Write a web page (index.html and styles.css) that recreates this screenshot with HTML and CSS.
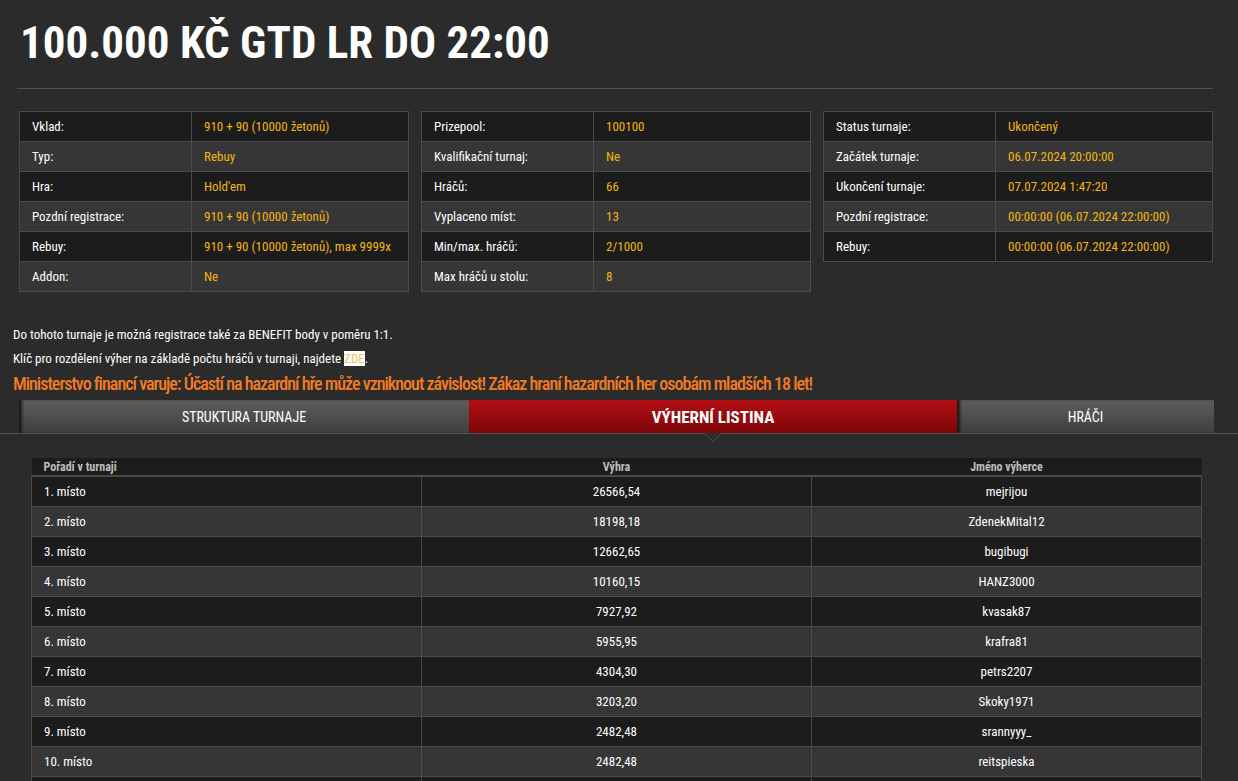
FILE: index.html
```html
<!DOCTYPE html>
<html lang="cs">
<head>
<meta charset="utf-8">
<title>100.000 KČ GTD LR DO 22:00</title>
<link rel="stylesheet" href="styles.css">
</head>
<body>
<div class="page">
  <header class="head">
    <h1 class="title">100.000 KČ GTD LR DO 22:00</h1>
  </header>

  <div class="info-grid">
    <table class="info">
      <tr><td class="lbl">Vklad:</td><td class="val">910 + 90 (10000 žetonů)</td></tr>
      <tr><td class="lbl">Typ:</td><td class="val">Rebuy</td></tr>
      <tr><td class="lbl">Hra:</td><td class="val">Hold'em</td></tr>
      <tr><td class="lbl">Pozdní registrace:</td><td class="val">910 + 90 (10000 žetonů)</td></tr>
      <tr><td class="lbl">Rebuy:</td><td class="val">910 + 90 (10000 žetonů), max 9999x</td></tr>
      <tr><td class="lbl">Addon:</td><td class="val">Ne</td></tr>
    </table>
    <table class="info">
      <tr><td class="lbl">Prizepool:</td><td class="val">100100</td></tr>
      <tr><td class="lbl">Kvalifikační turnaj:</td><td class="val">Ne</td></tr>
      <tr><td class="lbl">Hráčů:</td><td class="val">66</td></tr>
      <tr><td class="lbl">Vyplaceno míst:</td><td class="val">13</td></tr>
      <tr><td class="lbl">Min/max. hráčů:</td><td class="val">2/1000</td></tr>
      <tr><td class="lbl">Max hráčů u stolu:</td><td class="val">8</td></tr>
    </table>
    <table class="info">
      <tr><td class="lbl">Status turnaje:</td><td class="val">Ukončený</td></tr>
      <tr><td class="lbl">Začátek turnaje:</td><td class="val">06.07.2024 20:00:00</td></tr>
      <tr><td class="lbl">Ukončení turnaje:</td><td class="val">07.07.2024 1:47:20</td></tr>
      <tr><td class="lbl">Pozdní registrace:</td><td class="val">00:00:00 (06.07.2024 22:00:00)</td></tr>
      <tr><td class="lbl">Rebuy:</td><td class="val">00:00:00 (06.07.2024 22:00:00)</td></tr>
    </table>
  </div>

  <div class="notes">
    <p class="note">Do tohoto turnaje je možná registrace také za BENEFIT body v poměru 1:1.</p>
    <p class="note">Klíč pro rozdělení výher na základě počtu hráčů v turnaji, najdete <a class="zde" href="#">ZDE</a>.</p>
    <p class="warning">Ministerstvo financí varuje: Účastí na hazardní hře může vzniknout závislost! Zákaz hraní hazardních her osobám mladších 18 let!</p>
  </div>

  <nav class="tabs">
    <a class="tab tab-1" href="#">STRUKTURA TURNAJE</a>
    <a class="tab tab-2 active" href="#">VÝHERNÍ LISTINA</a>
    <a class="tab tab-3" href="#">HRÁČI</a>
  </nav>

  <div class="results-wrap">
    <table class="results">
      <thead>
        <tr><th class="c1">Pořadí v turnaji</th><th class="c2">Výhra</th><th class="c3">Jméno výherce</th></tr>
      </thead>
      <tbody>
        <tr><td class="c1">1. místo</td><td class="c2">26566,54</td><td class="c3">mejrijou</td></tr>
        <tr><td class="c1">2. místo</td><td class="c2">18198,18</td><td class="c3">ZdenekMital12</td></tr>
        <tr><td class="c1">3. místo</td><td class="c2">12662,65</td><td class="c3">bugibugi</td></tr>
        <tr><td class="c1">4. místo</td><td class="c2">10160,15</td><td class="c3">HANZ3000</td></tr>
        <tr><td class="c1">5. místo</td><td class="c2">7927,92</td><td class="c3">kvasak87</td></tr>
        <tr><td class="c1">6. místo</td><td class="c2">5955,95</td><td class="c3">krafra81</td></tr>
        <tr><td class="c1">7. místo</td><td class="c2">4304,30</td><td class="c3">petrs2207</td></tr>
        <tr><td class="c1">8. místo</td><td class="c2">3203,20</td><td class="c3">Skoky1971</td></tr>
        <tr><td class="c1">9. místo</td><td class="c2">2482,48</td><td class="c3">srannyyy_</td></tr>
        <tr><td class="c1">10. místo</td><td class="c2">2482,48</td><td class="c3">reitspieska</td></tr>
        <tr><td class="c1"></td><td class="c2"></td><td class="c3"></td></tr>
      </tbody>
    </table>
  </div>
</div>
</body>
</html>
```

FILE: styles.css
```css
* { box-sizing: border-box; }

html, body {
  margin: 0;
  padding: 0;
  background: #2b2b2b;
  color: #ffffff;
  font-family: Roboto, "Liberation Sans", sans-serif;
  font-stretch: condensed;
}

.page {
  width: 1238px;
}

.head {
  margin: 0 25px 0 17px;
  padding: 18px 0 20px 3px;
  border-bottom: 1px solid #505050;
}

.title {
  margin: 0;
  font-weight: 700;
  font-size: 45px;
  line-height: 50px;
  white-space: nowrap;
}

.info-grid {
  display: flex;
  gap: 12px;
  padding: 22px 0 0 19px;
  align-items: flex-start;
}

.info {
  width: 390px;
  border-collapse: collapse;
  border: 1px solid #4b4b4b;
  table-layout: fixed;
}

.info tr:nth-child(odd) { background: #1c1c1c; }
.info tr:nth-child(even) { background: #363636; }

.info td {
  height: 30px;
  padding: 0 12px;
  border: 1px solid #4b4b4b;
  font-size: 13px;
  white-space: nowrap;
}

.info td.lbl { width: 172px; color: #ffffff; }
.info td.val { color: #f2b60c; }

.notes {
  padding: 35px 0 0 13px;
}

.note {
  margin: 0 0 8px;
  font-size: 13px;
  line-height: 16px;
}

.zde {
  background: #ffffff;
  color: #e9c46a;
  text-decoration: none;
}

.warning {
  margin: -3px 0 0 0;
  color: #f47c20;
  font-size: 18px;
  line-height: 24px;
  font-weight: 500;
  letter-spacing: -0.98px;
  white-space: nowrap;
}

.tabs {
  display: flex;
  margin-top: 4px;
  padding-left: 19px;
  border-bottom: 1px solid #555555;
}

.tab {
  height: 33px;
  display: flex;
  align-items: center;
  justify-content: center;
  color: #ffffff;
  text-decoration: none;
  font-size: 14px;
  background: linear-gradient(#5d5d5d, #3f3f3f);
  box-shadow: inset 4px 0 3px -1px #1a1a1a;
}

.tab-1 { width: 450px; }
.tab-2 { width: 488px; }
.tab-3 { width: 257px; }

.tab.active {
  position: relative;
  background: linear-gradient(#b20f13, #7c0508);
  font-size: 17px;
  font-weight: 700;
  box-shadow: none;
}

.tab.active::after {
  content: "";
  position: absolute;
  left: 50%;
  bottom: -9px;
  margin-left: -9px;
  width: 0;
  height: 0;
  border-left: 9px solid transparent;
  border-right: 9px solid transparent;
  border-top: 9px solid #555555;
}

.tab.active::before {
  content: "";
  position: absolute;
  left: 50%;
  bottom: -8px;
  margin-left: -8px;
  width: 0;
  height: 0;
  border-left: 8px solid transparent;
  border-right: 8px solid transparent;
  border-top: 8px solid #2b2b2b;
  z-index: 1;
}

.results-wrap {
  padding: 24px 36px 0 31px;
}

.results {
  width: 1171px;
  border-collapse: collapse;
  table-layout: fixed;
}

.results th {
  height: 18px;
  background: #1c1c1c;
  color: #bdbdbd;
  font-size: 12px;
  font-weight: 700;
  padding: 0 12px;
  border-bottom: 2px solid #4b4b4b;
}

.results th.c1 { text-align: left; }

.results td {
  height: 30px;
  border: 1px solid #4b4b4b;
  font-size: 13px;
  padding: 0 12px;
  text-align: center;
}

.results td.c1 { text-align: left; }

.results tbody tr:nth-child(odd) { background: #1c1c1c; }
.results tbody tr:nth-child(even) { background: #363636; }
```
